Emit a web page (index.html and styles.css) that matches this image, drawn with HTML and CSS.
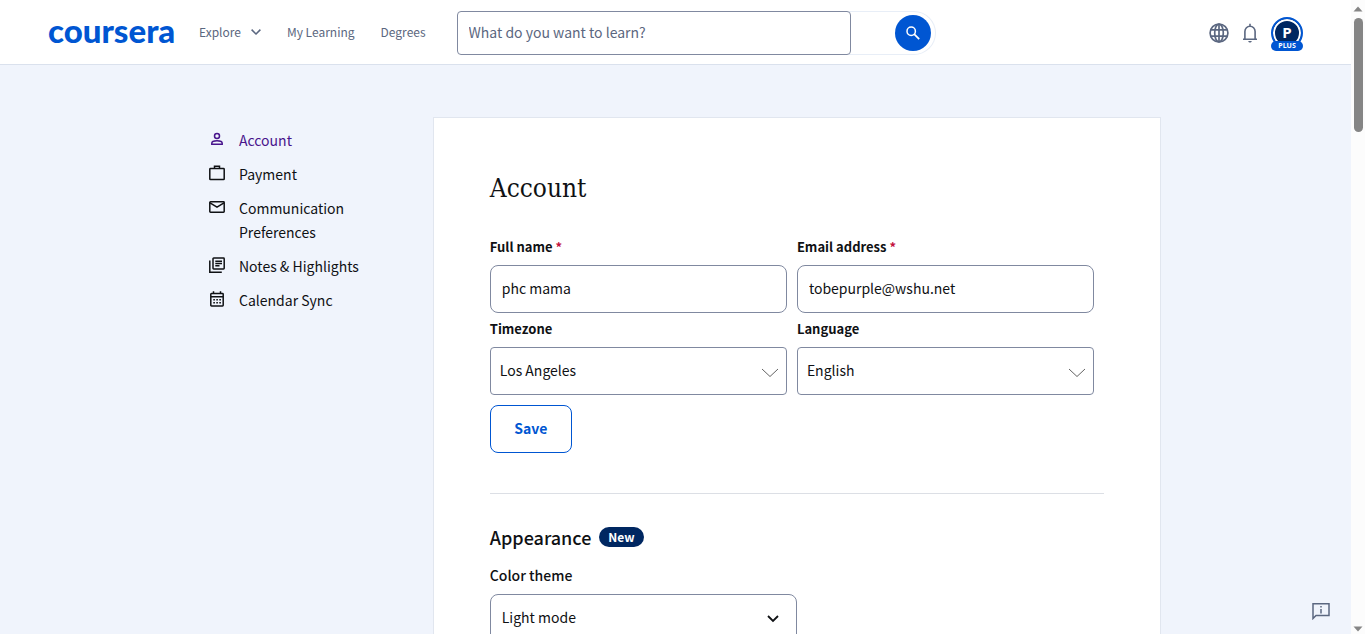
FILE: index.html
```html
<!DOCTYPE html>
<html lang="en">
<head>
  <meta charset="UTF-8">
  <meta name="viewport" content="width=device-width, initial-scale=1.0">
  <title>Account Settings | Coursera</title>
  <link rel="stylesheet" href="styles.css">
</head>
<body>
  <div class="page">
    <header class="header">
      <a class="logo" href="#">coursera</a>
      <nav class="main-nav">
        <button class="explore" type="button">Explore
          <svg width="10" height="6" viewBox="0 0 10 6" fill="none" stroke="currentColor" stroke-width="1.5"><path d="M.6.6 5 5 9.4.6"/></svg>
        </button>
        <a href="#">My Learning</a>
        <a href="#">Degrees</a>
      </nav>
      <form class="search">
        <input type="text" placeholder="What do you want to learn?" aria-label="What do you want to learn?">
        <button type="button" aria-label="Search">
          <svg width="14" height="14" viewBox="0 0 14 14" fill="none" stroke="#fff" stroke-width="1.5"><circle cx="5.2" cy="5.2" r="4.2"/><path d="m8.2 8.2 5 5" stroke-width="1.8"/></svg>
        </button>
      </form>
      <div class="tools">
        <button type="button" aria-label="Language">
          <svg width="20" height="20" viewBox="0 0 20 20" fill="none" stroke="currentColor" stroke-width="1.7"><circle cx="10" cy="10" r="8.9"/><ellipse cx="10" cy="10" rx="4.3" ry="8.9"/><path d="M10 1v18M1.6 6.8h16.8M1.6 13.2h16.8"/></svg>
        </button>
        <button type="button" aria-label="Notifications">
          <svg width="20" height="20" viewBox="0 0 20 20" fill="none" stroke="currentColor" stroke-width="1.6"><path d="M3 16.3h14M4.9 16.3V8.4a5.1 5.1 0 0 1 10.2 0v7.9M10 3.2V.8"/><path d="M8.2 18h3.6c-.3 1-1 1.500-1.800 1.500S8.500 19 8.200 18z" fill="currentColor" stroke="none"/></svg>
        </button>
        <button class="avatar" type="button" aria-label="Profile">
          <span class="avatar-letter">P</span>
          <span class="avatar-plus">PLUS</span>
        </button>
      </div>
    </header>

    <div class="content">
      <nav class="sidebar">
        <a class="active" href="#">
          <svg width="16" height="16" viewBox="0 0 16 16" fill="none" stroke="currentColor" stroke-width="1.5"><circle cx="8" cy="5" r="2.5"/><path d="M2.8 13.2v-1c0-1.600 2.600-2.500 5.200-2.500s5.200.9 5.200 2.500v1z"/></svg>
          <span>Account</span>
        </a>
        <a href="#">
          <svg width="16" height="16" viewBox="0 0 16 16" fill="none" stroke="currentColor" stroke-width="1.5"><rect x=".8" y="3.6" width="14.4" height="11" rx=".7"/><path d="M5.500 3.500V1.200h5v2.300"/></svg>
          <span>Payment</span>
        </a>
        <a href="#">
          <svg width="16" height="16" viewBox="0 0 16 16" fill="none" stroke="currentColor" stroke-width="1.5"><rect x=".8" y="2.8" width="14.4" height="10.5" rx=".7"/><path d="m1 3.800 7 4.400 7-4.400"/></svg>
          <span>Communication Preferences</span>
        </a>
        <a href="#">
          <svg width="16" height="16" viewBox="0 0 16 16" fill="none" stroke="currentColor" stroke-width="1.5"><rect x="4" y="1" width="11.2" height="11" rx=".7"/><path d="M.8 3.500v11.700h12M6.300 4.200h6.700M6.300 6.500h6.700M6.300 8.800h4.200"/></svg>
          <span>Notes &amp; Highlights</span>
        </a>
        <a href="#">
          <svg width="16" height="16" viewBox="0 0 16 16" fill="none" stroke="currentColor" stroke-width="1.5"><rect x="1.8" y="2.5" width="12.4" height="12.5" rx=".7"/><path d="M2 5.800h12M4.500.3v2.500M11.500.3v2.500"/><path d="M4.300 8.700h7.600M4.300 11.800h7.600" stroke-dasharray="1.6 1.4"/></svg>
          <span>Calendar Sync</span>
        </a>
      </nav>

      <main class="card">
        <h1>Account</h1>
        <form class="account-form">
          <div class="field">
            <label for="fullname">Full name <span class="required">*</span></label>
            <input id="fullname" type="text" value="phc mama">
          </div>
          <div class="field">
            <label for="email">Email address <span class="required">*</span></label>
            <input id="email" type="email" value="tobepurple@wshu.net">
          </div>
          <div class="field">
            <label for="timezone">Timezone</label>
            <div class="select">
              <select id="timezone"><option>Los Angeles</option></select>
              <svg width="18" height="10" viewBox="0 0 18 10" fill="none" stroke="#636363"><path d="m1 1 8 7.500L17 1"/></svg>
            </div>
          </div>
          <div class="field">
            <label for="language">Language</label>
            <div class="select">
              <select id="language"><option>English</option></select>
              <svg width="18" height="10" viewBox="0 0 18 10" fill="none" stroke="#636363"><path d="m1 1 8 7.500L17 1"/></svg>
            </div>
          </div>
          <button class="save" type="button">Save</button>
        </form>

        <section class="appearance">
          <h2>Appearance <span class="badge">New</span></h2>
          <label for="theme">Color theme</label>
          <div class="select theme">
            <select id="theme"><option>Light mode</option></select>
            <svg width="12" height="8" viewBox="0 0 12 8" fill="none" stroke="#0f1114" stroke-width="1.8"><path d="m1 1 5 5 5-5"/></svg>
          </div>
        </section>
      </main>
    </div>
  </div>

  <div class="scrollbar" aria-hidden="true">
    <svg width="10" height="6" viewBox="0 0 10 6"><path d="M5 .5 9.500 5.500h-9z" fill="#858585"/></svg>
    <div class="thumb"></div>
    <svg width="10" height="6" viewBox="0 0 10 6"><path d="M5 5.500.5.500h9z" fill="#858585"/></svg>
  </div>

  <button class="feedback" type="button" aria-label="Give feedback">
    <svg width="18" height="18" viewBox="0 0 18 18" fill="none" stroke="currentColor" stroke-width="1.5"><path d="M1 16.500V1.800h16v11.700H4z"/><path d="M9 4v1.600M9 7v4.500"/></svg>
  </button>
</body>
</html>
```
FILE: styles.css
```css
* {
  box-sizing: border-box;
}
body {
  margin: 0;
  height: 100vh;
  display: flex;
  overflow: hidden;
  background-color: #fcfcfc;
  color: #0f1114;
  font-family: "Noto Sans CJK SC", "Noto Sans", sans-serif;
  font-size: 14px;
  line-height: 24px;
}
a {
  color: inherit;
  text-decoration: none;
}
button, input, select {
  font: inherit;
  color: inherit;
}
button {
  padding: 0;
  border: 0;
  background: none;
  cursor: pointer;
}
svg {
  display: block;
  flex-shrink: 0;
}
.page {
  flex: 1;
  min-width: 0;
  overflow: hidden;
  background-color: #f0f4fc;
}

/* Header */
.header {
  display: flex;
  align-items: center;
  height: 65px;
  padding: 2px 48px 0;
  background-color: #fff;
  border-bottom: 1px solid #dae1ed;
}
.logo {
  width: 127px;
  margin-right: 24px;
  padding-bottom: 6px;
  color: #0056d2;
  font-family: Lato, sans-serif;
  font-size: 33px;
  font-weight: 900;
}
.main-nav {
  display: flex;
  gap: 26px;
  margin-right: 31px;
  padding-bottom: 2px;
  color: #5b6780;
  font-size: 12px;
}
.explore {
  display: flex;
  align-items: center;
  gap: 10px;
}
.search {
  display: flex;
  justify-content: space-between;
  align-items: center;
  width: 479px;
  height: 44px;
  padding-right: 4px;
  border: 1px solid #e8eef7;
  border-left: 0;
  border-radius: 22px;
}
.search input {
  width: 394px;
  height: 44px;
  padding: 0 11px 2px;
  background-color: #fff;
  border: 1px solid #8089a0;
  border-radius: 4px;
}
.search input::placeholder {
  color: #5b6780;
}
.search button {
  display: flex;
  align-items: center;
  justify-content: center;
  width: 36px;
  height: 36px;
  border-radius: 50%;
  background-color: #0056d2;
}
.tools {
  display: flex;
  align-items: center;
  gap: 11px;
  margin-left: auto;
  color: #5b6780;
}
.avatar {
  display: flex;
  flex-direction: column;
  align-items: center;
  width: 32px;
  height: 32px;
  padding-top: 4px;
  border: 2px solid #0056d2;
  border-radius: 50%;
  background-color: #002761;
  box-shadow: inset 0 0 0 2px #fff;
  color: #fff;
  font-family: "Open Sans", sans-serif;
  font-weight: 700;
}
.avatar-letter {
  font-size: 15px;
  line-height: 18px;
}
.avatar-plus {
  width: 32px;
  flex-shrink: 0;
  border-radius: 5px;
  background-color: #0056d2;
  font-size: 7px;
  line-height: 10px;
}

/* Settings */
.content {
  display: flex;
  align-items: flex-start;
  max-width: 971px;
  margin: 52px auto 0;
}
.sidebar {
  flex: 1;
  display: flex;
  flex-direction: column;
  gap: 10px;
  padding: 11px 40px 0 19px;
}
.sidebar a {
  display: flex;
  gap: 14px;
}
.sidebar svg {
  margin-top: 3px;
}
.sidebar .active {
  color: #48148c;
}
.card {
  width: 75%;
  padding: 52px 56px;
  background-color: #fff;
  border: 1px solid #e1e6ef;
}
h1 {
  margin: 0 0 31px;
  font-family: "DejaVu Serif Condensed", "DejaVu Serif", serif;
  font-size: 26px;
  font-weight: 400;
  line-height: 36px;
}
.account-form {
  display: grid;
  grid-template-columns: 1fr 1fr;
  gap: 6px 10px;
  padding: 0 10px 40px 0;
}
label {
  display: block;
  margin-bottom: 8px;
  font-size: 13px;
  font-weight: 700;
  line-height: 20px;
}
.required {
  color: #c3113f;
}
.field input,
.select select {
  display: block;
  width: 100%;
  height: 48px;
  padding: 0 11px 2px;
  background-color: #fff;
  border: 1px solid #8089a0;
  border-radius: 8px;
}
.select {
  position: relative;
}
.select select {
  appearance: none;
  padding: 0 9px 2px;
  border-radius: 4px;
}
.select svg {
  position: absolute;
  top: 21px;
  right: 8px;
  pointer-events: none;
}
.save {
  width: 82px;
  height: 48px;
  margin-top: 4px;
  padding-bottom: 2px;
  border: 1px solid #0056d2;
  border-radius: 8px;
  color: #0056d2;
  font-weight: 700;
}
.appearance {
  padding-top: 29px;
  border-top: 1px solid #dcdfe5;
}
h2 {
  display: flex;
  align-items: center;
  gap: 8px;
  margin: 0 0 14px;
  font-size: 18px;
  font-weight: 500;
  line-height: 28px;
}
.badge {
  padding: 0 9px;
  border-radius: 10px;
  background-color: #002761;
  color: #fff;
  font-size: 12px;
  font-weight: 700;
  line-height: 20px;
}
.appearance label {
  margin-bottom: 9px;
  font-size: 14px;
  font-weight: 500;
}
.theme {
  width: 50%;
}
.select.theme select {
  padding: 0 11px 2px;
  border-radius: 8px;
}
.theme svg {
  right: 18px;
}

/* Window edge */
.scrollbar {
  display: flex;
  flex-direction: column;
  align-items: center;
  width: 14px;
  padding: 6px 0 2px;
}
.thumb {
  width: 9px;
  height: 18vh;
  margin: 6px 0 auto;
  border-radius: 5px;
  background-color: #858585;
}
.feedback {
  position: fixed;
  right: 35px;
  bottom: 14px;
  color: #5b6780;
}
```
